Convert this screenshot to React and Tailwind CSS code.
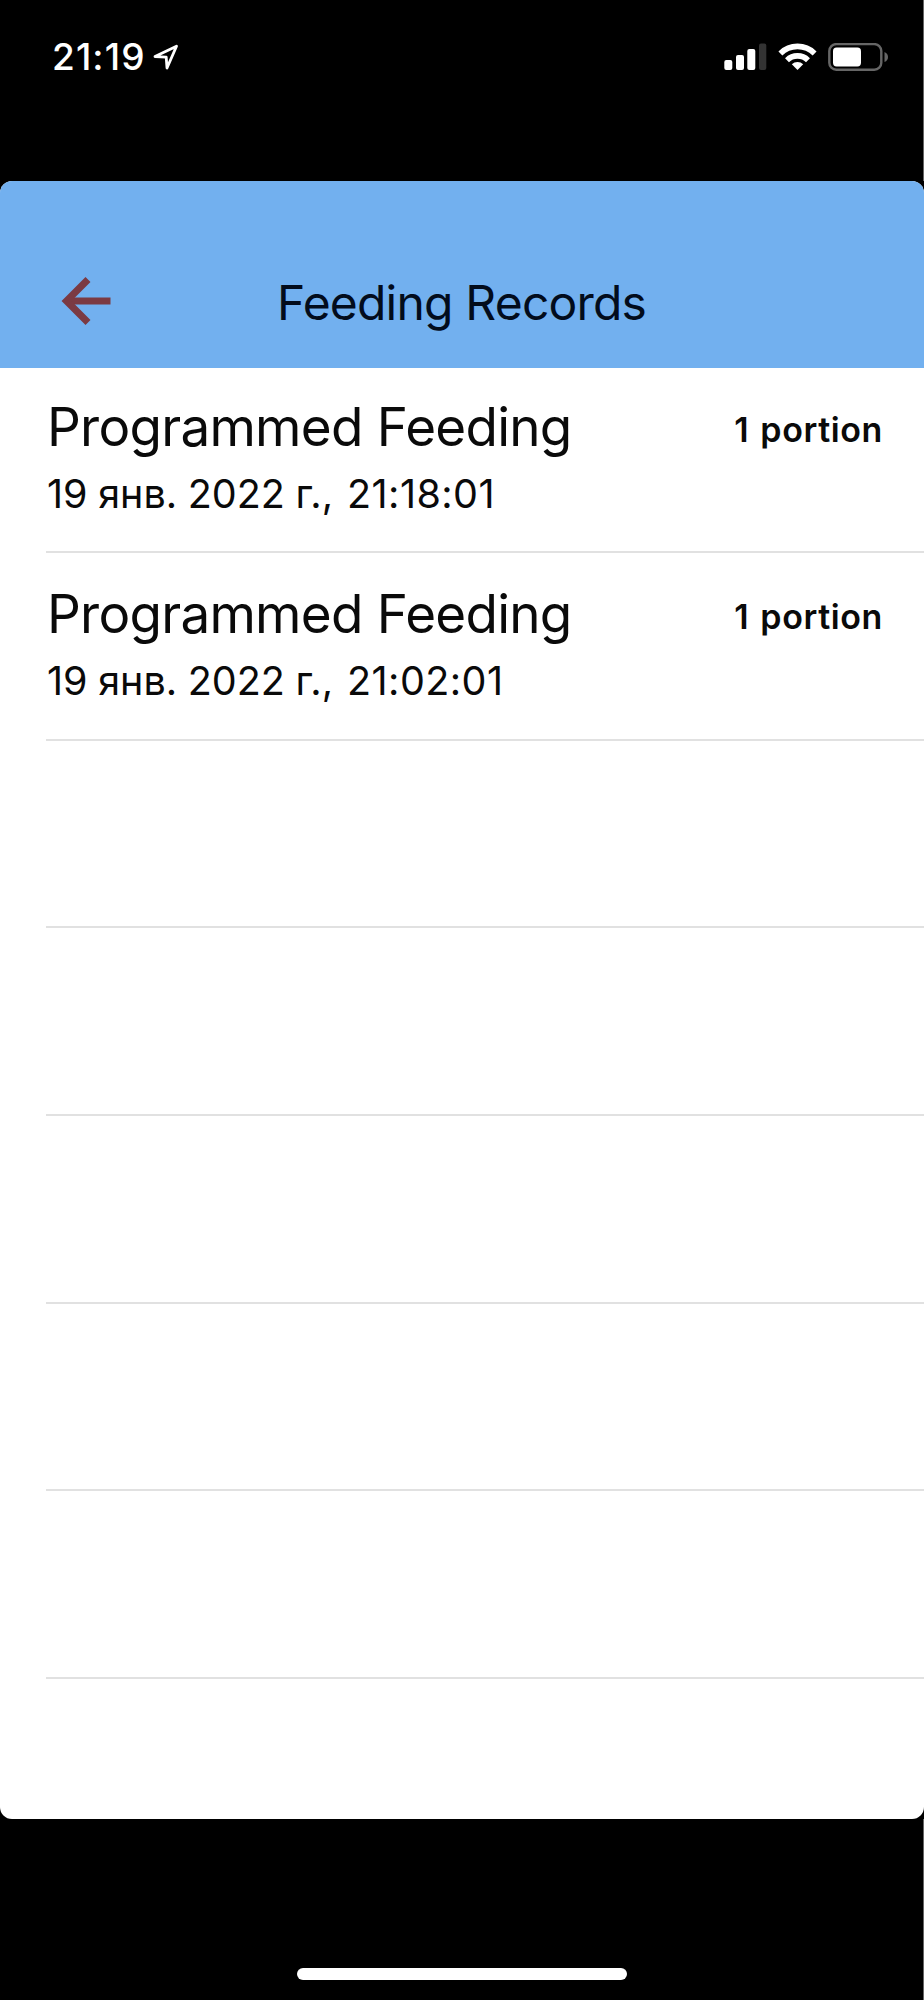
const records = [
  { id: 1, title: 'Programmed Feeding', date: '19 янв. 2022 г.,', clock: '21:18:01', amount: '1 portion' },
  { id: 2, title: 'Programmed Feeding', date: '19 янв. 2022 г.,', clock: '21:02:01', amount: '1 portion' },
]

const emptyRows = [1, 2, 3, 4, 5]

function StatusBar() {
  return (
    <div className="h-[181px] shrink-0 border-r border-[#666] pt-[37px] pl-[52px] pr-[34px] flex items-start justify-between text-white">
      <div className="flex items-center h-[40px]">
        <span className="text-[37px] leading-[40px] font-medium tracking-[1.1px] w-[101px] whitespace-nowrap">21:19</span>
        <svg width="26" height="26" viewBox="0 0 26 26" fill="none" stroke="currentColor" strokeWidth="2.8" strokeLinejoin="round">
          <path d="M2 12.6 L23.5 2.2 L14 24 L13.2 13.2 Z" />
        </svg>
      </div>
      <div className="flex items-center h-[39px]">
        <svg width="43" height="28" viewBox="0 0 43 28" fill="currentColor">
          <rect x="0.3" y="17" width="8" height="10" rx="2" />
          <rect x="12" y="12" width="8" height="15" rx="2" />
          <rect x="23.3" y="6" width="8" height="21" rx="2" />
          <rect x="35" y="0.5" width="7.3" height="26.5" rx="2" fill="#333" />
        </svg>
        <svg className="ml-[11px]" width="39" height="28" viewBox="0 0 39 28" fill="none" stroke="currentColor" strokeWidth="5.6">
          <path d="M2.4 10.4 A24.4 24.4 0 0 1 36.6 10.4" />
          <path d="M9 17.2 A15 15 0 0 1 30 17.2" />
          <path d="M19.5 27 L13.8 21.3 A8.2 8.2 0 0 1 25.2 21.3 Z" fill="currentColor" stroke="none" />
        </svg>
        <svg className="ml-[11px]" width="61" height="28" viewBox="0 0 61 28">
          <rect x="1.3" y="1.1" width="52" height="25.6" rx="7" fill="none" stroke="#666" strokeWidth="2.4" />
          <rect x="5" y="4.6" width="28" height="18.8" rx="3.6" fill="#fff" />
          <path d="M56.5 9 Q60 10.5 60 14 Q60 17.5 56.5 19 Z" fill="#666" />
        </svg>
      </div>
    </div>
  )
}

function Header() {
  return (
    <div className="h-[187px] shrink-0 bg-[#72b0ef] flex items-end pb-[40px]">
      <button className="ml-[61px] mb-[3px]" aria-label="Back">
        <svg width="50" height="48" viewBox="0 0 50 48" fill="none" stroke="#7b3a43" strokeWidth="7">
          <path d="M49.5 24 H5" />
          <path d="M27 2.5 L5.5 24 L27 45.5" />
        </svg>
      </button>
      <h1 className="ml-[166px] text-[48px] leading-[50px] tracking-[-0.8px] whitespace-nowrap text-[#020c1c]">Feeding Records</h1>
    </div>
  )
}

function Row({ record }) {
  return (
    <div className="h-[187.6px] shrink-0 ml-[46px] border-b-2 border-[#e1e1e1] flex justify-between">
      {record && (
        <>
          <div className="pt-[29px] pl-px">
            <div className="text-[53px] leading-[64px] tracking-[-0.75px] whitespace-nowrap">{record.title}</div>
            <div className="flex text-[39.5px] leading-[48px] mt-[11px] whitespace-nowrap">
              <span className="w-[300px] [word-spacing:-0.5px]">{record.date}</span>
              <span className="tracking-[0.45px]">{record.clock}</span>
            </div>
          </div>
          <div className="pt-[44px] pr-[41px] text-[34px] leading-[40px] font-semibold tracking-[0.6px] [word-spacing:2px] whitespace-nowrap">{record.amount}</div>
        </>
      )}
    </div>
  )
}

export default function App() {
  return (
    <div className="w-[924px] h-[2000px] bg-black flex flex-col overflow-hidden font-['Inter',sans-serif] text-[#0a0a0a]">
      <StatusBar />
      <div className="h-[1638px] shrink-0 rounded-[12px] bg-white overflow-hidden flex flex-col">
        <Header />
        <div className="h-[1451px] -mt-[2.4px] flex flex-col">
          {records.map(r => <Row key={r.id} record={r} />)}
          {emptyRows.map(n => <Row key={n} />)}
        </div>
      </div>
      <div className="flex-1 border-r border-[#666] flex items-end justify-center pb-[20px]">
        <div className="w-[330px] h-[12px] rounded-full bg-white" />
      </div>
    </div>
  )
}
